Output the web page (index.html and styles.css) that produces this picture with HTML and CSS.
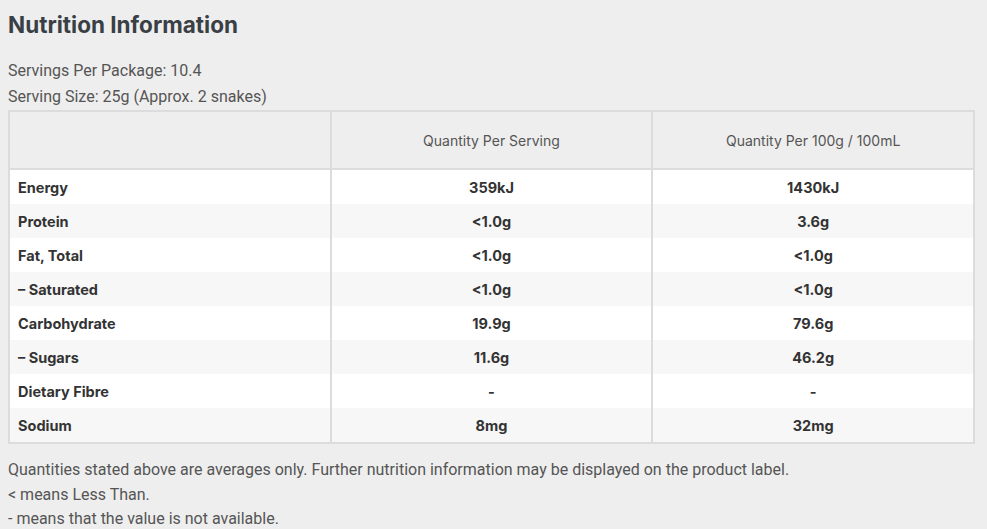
FILE: index.html
```html
<!DOCTYPE html>
<html lang="en">
<head>
    <meta charset="UTF-8">
    <meta name="viewport" content="width=device-width, initial-scale=1.0">
    <title>Nutrition Information</title>
    <link rel="stylesheet" href="styles.css">
</head>
<body>

    <h2 class="title">Nutrition Information</h2>

    <div class="servings">
        <p>Servings Per Package: 10.4</p>
        <p>Serving Size: 25g (Approx. 2 snakes)</p>
    </div>

    <table class="nutrition">
        <thead>
            <tr>
                <th></th>
                <th>Quantity Per Serving</th>
                <th>Quantity Per 100g / 100mL</th>
            </tr>
        </thead>
        <tbody>
            <tr><td>Energy</td><td>359kJ</td><td>1430kJ</td></tr>
            <tr><td>Protein</td><td>&lt;1.0g</td><td>3.6g</td></tr>
            <tr><td>Fat, Total</td><td>&lt;1.0g</td><td>&lt;1.0g</td></tr>
            <tr><td>– Saturated</td><td>&lt;1.0g</td><td>&lt;1.0g</td></tr>
            <tr><td>Carbohydrate</td><td>19.9g</td><td>79.6g</td></tr>
            <tr><td>– Sugars</td><td>11.6g</td><td>46.2g</td></tr>
            <tr><td>Dietary Fibre</td><td>-</td><td>-</td></tr>
            <tr><td>Sodium</td><td>8mg</td><td>32mg</td></tr>
        </tbody>
    </table>

    <div class="notes">
        <p>Quantities stated above are averages only. Further nutrition information may be displayed on the product label.</p>
        <p>&lt; means Less Than.</p>
        <p>- means that the value is not available.</p>
    </div>

</body>
</html>
```

FILE: styles.css
```css
body {
    margin: 0;
    padding: 0 8px;
    background-color: #eeeeee;
    font-family: Roboto, "Liberation Sans", sans-serif;
    color: #555;
}

p {
    margin: 0;
}

.title {
    margin: 0;
    padding-top: 10px;
    height: 44px;
    font-family: Inter, Lato, sans-serif;
    font-size: 22.5px;
    font-weight: 700;
    line-height: 30px;
    color: #3a3f45;
}

.servings {
    padding-top: 4px;
    font-size: 16px;
    line-height: 26px;
}

/* Таблица */
.nutrition {
    width: 967px;
    border-collapse: collapse;
    table-layout: fixed;
    font-family: Inter, Lato, sans-serif;
    font-size: 14px;
    color: #333;
}

.nutrition th,
.nutrition td {
    border-left: 2px solid #dcdcdc;
    border-right: 2px solid #dcdcdc;
    text-align: center;
}

.nutrition th {
    height: 56px;
    padding: 0;
    font-weight: 400;
    color: #555;
    background-color: #eeeeee;
    border-top: 2px solid #dcdcdc;
    border-bottom: 2px solid #dcdcdc;
}

.nutrition td {
    height: 34px;
    padding: 0;
    font-size: 14.5px;
    font-weight: 700;
}

.nutrition td:first-child {
    text-align: left;
    padding-left: 8px;
}

.nutrition tbody tr:nth-child(odd) {
    background-color: #ffffff;
}

.nutrition tbody tr:nth-child(even) {
    background-color: #f7f7f7;
}

.nutrition tbody tr:last-child td {
    border-bottom: 2px solid #dcdcdc;
}

.notes {
    padding-top: 14px;
    font-size: 16px;
    line-height: 24.5px;
}
```
